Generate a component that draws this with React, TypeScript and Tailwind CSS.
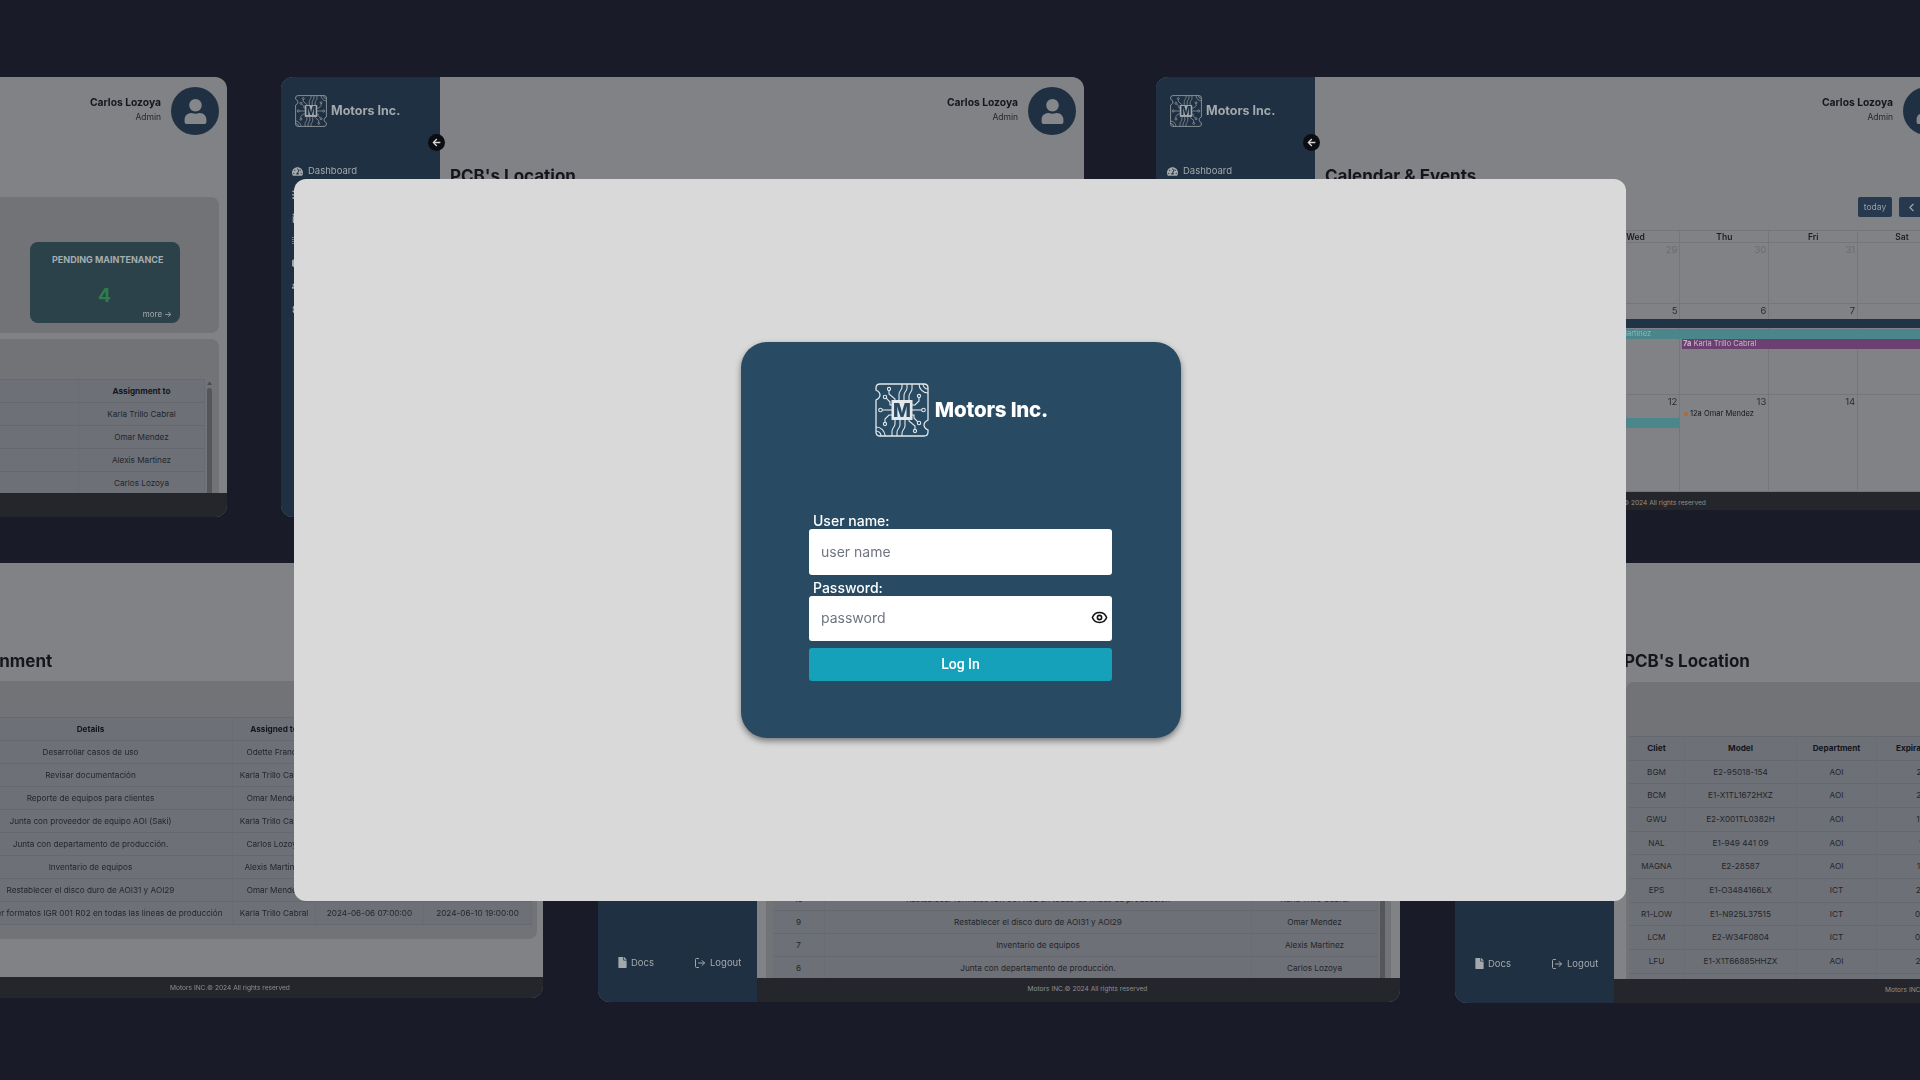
import React from 'react';
import { Eye, ChevronLeft, ChevronRight, LogOut } from 'lucide-react';
import { FaArrowLeft, FaFile, FaTachometerAlt, FaUser, FaTasks, FaCalendarAlt, FaMicrochip, FaUsers, FaCog, FaCube } from 'react-icons/fa';

const Logo = ({ className, ink }: { className: string; ink: string }) => {
  const half = (
    <>
      <path d="M24 17V11c0-3 3-4 3-7V1M29 17v-5c0-3 3-4 3-7V1M34 17v-4c0-3 3-4 3-7V1" />
      <circle cx="14" cy="6" r="1.6" />
      <path d="M14 7.6V11l6 5v1" />
      <circle cx="5.5" cy="27" r="1.8" />
      <path d="M7.3 27H17" />
      <circle cx="10" cy="14" r="1.7" />
      <path d="M11.2 15.2 15 19v3h2" />
      <path d="M44 1a9 9 0 0 0 9 9M48 1a5 5 0 0 0 5 5" />
      <circle cx="44" cy="13" r="1.6" />
      <path d="M44 14.6V18l-4 4h-3" />
    </>
  );
  return (
    <svg viewBox="0 0 54 54" className={className} fill="none" stroke="currentColor" strokeWidth="1.1">
      <path strokeWidth="1.3" d="M5 1H49Q53 1 53 5V37Q49 39 49 42T53 47V49Q53 53 49 53H5Q1 53 1 49V17Q5 15 5 12T1 7V5Q1 1 5 1Z" />
      {half}
      <g transform="rotate(180 27 27)">{half}</g>
      <rect x="16.5" y="17" width="21" height="20" fill="currentColor" stroke="none" />
      <text x="27" y="33.5" textAnchor="middle" fontFamily="Inter, sans-serif" fontWeight="800" fontSize="19" fill={ink} stroke="none">M</text>
    </svg>
  );
};

const navItems = [
  { label: 'Dashboard', icon: FaTachometerAlt },
  { label: 'Assignment', icon: FaTasks },
  { label: 'Calendar', icon: FaCalendarAlt },
  { label: "PCB's Location", icon: FaMicrochip },
  { label: 'Models', icon: FaCube },
  { label: 'Users', icon: FaUsers },
  { label: 'Settings', icon: FaCog },
];

const Sidebar = () => (
  <aside className="relative flex h-full w-[159px] shrink-0 flex-col bg-[#1f3042] text-[#a3a8ac]">
    <div className="flex items-center gap-[4px] pl-[14px] pt-[18px]">
      <Logo className="h-[32px] w-[32px] text-[#a3a8ac]" ink="#1f3042" />
      <span className="text-[12.5px] font-bold">Motors Inc.</span>
    </div>
    <nav className="ml-[11px] mt-[36px] flex flex-col gap-[7px] text-[9.5px]">
      {navItems.map(({ label, icon: Icon }) => (
        <div key={label} className="flex h-[16px] items-center gap-[5px]">
          <Icon className="h-[11px] w-[11px]" />
          <span>{label}</span>
        </div>
      ))}
    </nav>
    <div className="mt-auto flex items-center pb-[32px] pl-[20px] text-[9.5px]">
      <FaFile className="h-[11px] w-[9px]" />
      <span className="ml-[4px]">Docs</span>
      <LogOut className="ml-[40px] h-[12px] w-[12px]" />
      <span className="ml-[4px]">Logout</span>
    </div>
    <div className="absolute left-[147px] top-[57px] z-10 flex h-[17px] w-[17px] items-center justify-center rounded-full bg-[#0c0d11] text-[#d4d5d7]">
      <FaArrowLeft className="h-[9px] w-[9px]" />
    </div>
  </aside>
);

const TopBar = () => (
  <div className="flex h-[68px] shrink-0 items-start justify-end gap-[10px] pr-[8px] pt-[10px]">
    <div className="pt-[9px] text-right">
      <div className="text-[10.3px] font-bold leading-[13px] text-[#14161c]">Carlos Lozoya</div>
      <div className="mt-[2px] text-[8.5px] leading-[13px] text-[#25272c]">Admin</div>
    </div>
    <div className="flex h-[48px] w-[48px] items-center justify-center rounded-full bg-[#1f3042] text-[#85878b]">
      <FaUser className="h-[25px] w-[25px]" />
    </div>
  </div>
);

const Title = ({ children, top }: { children: React.ReactNode; top: string }) => (
  <h2 className={`${top} ml-[10px] h-[22px] shrink-0 whitespace-nowrap text-[17px] font-bold leading-[22px] text-[#14161c]`}>{children}</h2>
);

const PageFooter = ({ size }: { size: string }) => (
  <footer className={`${size} flex shrink-0 items-center justify-center bg-[#25262b] pl-[18px] text-[6.6px] text-[#8d8f93]`}>
    Motors INC.© 2024 All rights reserved
  </footer>
);

const Table = ({ cols, rowClass, rows }: { cols: string; rowClass: string; rows: string[][] }) => (
  <div className="border-t border-[#65686f] bg-[#6d7077] text-[8.2px] text-[#24262b]">
    {rows.map((row, i) => (
      <div key={i} className={`grid ${cols} ${rowClass} border-b border-[#65686f] ${i === 0 ? 'font-bold text-[#14161c]' : ''}`}>
        {row.map((cell, j) => (
          <div key={j} className="flex items-center justify-center whitespace-nowrap border-r border-[#696c73]">{cell}</div>
        ))}
      </div>
    ))}
  </div>
);

const Scrollbar = () => (
  <div className="flex w-[5px] shrink-0 flex-col items-center">
    <span className="mb-[2px] mt-[2px] text-[5px] leading-[5px] text-[#4a4c50]">▲</span>
    <div className="w-[5px] flex-1 rounded-sm bg-[#54565a]" />
  </div>
);

const DashboardWindow = () => (
  <section className="absolute left-[-576px] top-[77px] flex h-[440px] w-[803px] overflow-hidden rounded-[12px] bg-[#818286]">
    <Sidebar />
    <div className="flex min-w-0 flex-1 flex-col">
      <TopBar />
      <div className="flex min-h-0 flex-1 flex-col overflow-hidden pl-[11px] pr-[8px] pt-[52px]">
        <div className="flex h-[136px] shrink-0 justify-end rounded-[8px] bg-[#727377] pr-[39px] pt-[45px]">
          <div className="relative h-[81px] w-[150px] rounded-[8px] bg-[#2b424a] text-[#a6adb0]">
            <div className="pl-[22px] pt-[11px] text-[9px] font-bold">PENDING MAINTENANCE</div>
            <div className="mt-[17px] pl-[68px] text-[19px] font-bold leading-[24px] text-[#2d7d4b]">4</div>
            <div className="absolute bottom-[3px] right-[8px] text-[8px]">more →</div>
          </div>
        </div>
        <div className="mt-[6px] flex flex-1 gap-[2px] rounded-t-[8px] bg-[#727377] pr-[7px] pt-[40px]">
          <div className="flex-1">
            <Table
              cols="grid-cols-[1fr_126px]"
              rowClass="h-[23px]"
              rows={[
                ['', 'Assignment to'],
                ['', 'Karla Trillo Cabral'],
                ['', 'Omar Mendez'],
                ['', 'Alexis Martinez'],
                ['', 'Carlos Lozoya'],
              ]}
            />
          </div>
          <Scrollbar />
        </div>
      </div>
      <PageFooter size="h-[24px]" />
    </div>
  </section>
);

const LocationTopWindow = () => (
  <section className="absolute left-[281px] top-[77px] flex h-[440px] w-[803px] overflow-hidden rounded-[12px] bg-[#818286]">
    <Sidebar />
    <div className="flex min-w-0 flex-1 flex-col">
      <TopBar />
      <Title top="mt-[20px]">PCB's Location</Title>
    </div>
  </section>
);

const weeks = [
  { height: 'h-[61px]', days: ['26', '27', '28', '29', '30', '31', '1'], muted: 6 },
  { height: 'h-[91px]', days: ['2', '3', '4', '5', '6', '7', '8'], muted: 0 },
  { height: 'h-[97px]', days: ['9', '10', '11', '12', '13', '14', '15'], muted: 0 },
];

const CalendarWindow = () => (
  <section className="absolute left-[1156px] top-[77px] flex h-[433px] w-[803px] overflow-hidden rounded-[12px] bg-[#818286]">
    <Sidebar />
    <div className="flex min-w-0 flex-1 flex-col">
      <TopBar />
      <Title top="mt-[20px]">Calendar &amp; Events</Title>
      <div className="ml-[10px] mt-[10px] w-[622px] flex-1 overflow-hidden">
        <div className="flex justify-end">
          <div className="mr-[7px] flex h-[20px] w-[34px] items-center justify-center rounded-[2px] bg-[#27394f] text-[8.5px] text-[#9aa0a8]">today</div>
          <div className="flex h-[20px] w-[24px] items-center justify-center rounded-l-[2px] bg-[#27394f] text-[#a3a8ac]">
            <ChevronLeft className="h-[13px] w-[13px]" />
          </div>
          <div className="flex h-[20px] w-[24px] items-center justify-center rounded-r-[2px] bg-[#27394f] text-[#a3a8ac]">
            <ChevronRight className="h-[13px] w-[13px]" />
          </div>
        </div>
        <div className="mt-[13px] border-t border-[#75767a] text-[8.5px] text-[#1c1e24]">
          <div className="grid h-[12px] grid-cols-7 border-b border-[#75767a] font-semibold">
            {['Sun', 'Mon', 'Tue', 'Wed', 'Thu', 'Fri', 'Sat'].map((d) => (
              <div key={d} className="flex items-center justify-center border-r border-[#75767a]">{d}</div>
            ))}
          </div>
          {weeks.map((week, w) => (
            <div key={w} className={`relative grid ${week.height} grid-cols-7 border-b border-[#75767a]`}>
              {week.days.map((day, i) => (
                <div key={day} className={`border-r border-[#75767a] pr-[2px] text-right text-[9.5px] ${w === 0 && i < week.muted ? 'text-[#6a6b6f]' : 'text-[#2a2c31]'}`}>{day}</div>
              ))}
              {w === 1 && (
                <>
                  <div className="absolute left-0 right-0 top-[15px] h-[9px] bg-[#203347]" />
                  <div className="absolute left-[272px] right-0 top-[25px] h-[10px] bg-[#4a868c] text-[7.5px] leading-[10px] text-[#8fb8b8]">Alexis Martinez</div>
                  <div className="absolute left-[357px] right-0 top-[35px] h-[10px] bg-[#6b4070] pl-[1px] text-[7.5px] leading-[10px] text-[#c8b4c8]">
                    <b>7a</b> Karla Trillo Cabral
                  </div>
                </>
              )}
              {w === 2 && (
                <>
                  <div className="absolute left-0 top-[23px] h-[10px] w-[354px] rounded-r-[1px] bg-[#4a868c]" />
                  <div className="absolute left-[359px] top-[14px] flex items-center gap-[2px] text-[7.5px] leading-[9px] text-[#14161c]">
                    <span className="h-[4px] w-[4px] rounded-full bg-[#b8662a]" />
                    12a Omar Mendez
                  </div>
                </>
              )}
            </div>
          ))}
        </div>
      </div>
      <PageFooter size="h-[18px] pt-[6px]" />
    </div>
  </section>
);

const assignmentRows = [
  ['', 'Details', 'Assigned to', 'Start date', 'End date'],
  ['1', 'Desarrollar casos de uso', 'Odette Franco', '2024-05-20 08:00:00', '2024-05-24 18:00:00'],
  ['2', 'Revisar documentación', 'Karla Trillo Cabral', '2024-05-22 09:00:00', '2024-05-23 17:00:00'],
  ['3', 'Reporte de equipos para clientes', 'Omar Mendez', '2024-05-27 08:00:00', '2024-05-28 12:00:00'],
  ['4', 'Junta con proveedor de equipo AOI (Saki)', 'Karla Trillo Cabral', '2024-05-29 10:00:00', '2024-05-29 12:00:00'],
  ['6', 'Junta con departamento de producción.', 'Carlos Lozoya', '2024-05-30 09:00:00', '2024-05-30 11:00:00'],
  ['7', 'Inventario de equipos', 'Alexis Martinez', '2024-06-03 07:00:00', '2024-06-07 19:00:00'],
  ['9', 'Restablecer el disco duro de AOI31 y AOI29', 'Omar Mendez', '2024-06-04 08:00:00', '2024-06-05 18:00:00'],
  ['10', 'Restablecer formatos IGR 001 R02 en todas las lineas de producción', 'Karla Trillo Cabral', '2024-06-06 07:00:00', '2024-06-10 19:00:00'],
];

const AssignmentWindow = () => (
  <section className="absolute left-[-260px] top-[563px] flex h-[435px] w-[803px] overflow-hidden rounded-[12px] bg-[#818286]">
    <Sidebar />
    <div className="flex min-w-0 flex-1 flex-col">
      <TopBar />
      <Title top="mt-[19px]">Task Assignment</Title>
      <div className="min-h-0 flex-1 pl-[11px] pr-[6px] pt-[9px]">
        <div className="h-[258px] rounded-[8px] bg-[#727377] pl-[6px] pr-[5px] pt-[36px]">
          <Table cols="grid-cols-[33px_284px_83px_108px_108px]" rowClass="h-[23px]" rows={assignmentRows} />
        </div>
      </div>
      <PageFooter size="h-[21px] pt-[2px]" />
    </div>
  </section>
);

const TasksWindow = () => (
  <section className="absolute left-[598px] top-[563px] flex h-[439px] w-[802px] overflow-hidden rounded-[12px] bg-[#818286]">
    <Sidebar />
    <div className="flex min-w-0 flex-1 flex-col">
      <TopBar />
      <Title top="mt-[19px]">Assignment</Title>
      <div className="min-h-0 flex-1 overflow-hidden pl-[9px] pr-[9px] pt-[9px]">
        <div className="flex h-[400px] gap-[2px] rounded-[8px] bg-[#727377] pl-[7px] pr-[6px] pt-[91px]">
          <div className="flex-1">
            <Table
              cols="grid-cols-[52px_1fr_126px]"
              rowClass="h-[23px]"
              rows={[
                ['ID', 'Details', 'Assigned to'],
                ['14', 'Desarrollar casos de uso', 'Odette Franco'],
                ['13', 'Revisar documentación', 'Karla Trillo Cabral'],
                ['12', 'Reporte de equipos para clientes', 'Omar Mendez'],
                ['11', 'Junta con proveedor de equipo AOI (Saki)', 'Karla Trillo Cabral'],
                ['10', 'Restablecer formatos IGR 001 R02 en todas las lineas de producción', 'Karla Trillo Cabral'],
                ['9', 'Restablecer el disco duro de AOI31 y AOI29', 'Omar Mendez'],
                ['7', 'Inventario de equipos', 'Alexis Martinez'],
                ['6', 'Junta con departamento de producción.', 'Carlos Lozoya'],
              ]}
            />
          </div>
          <Scrollbar />
        </div>
      </div>
      <PageFooter size="h-[24px]" />
    </div>
  </section>
);

const LocationWindow = () => (
  <section className="absolute left-[1455px] top-[563px] flex h-[440px] w-[803px] overflow-hidden rounded-[12px] bg-[#818286]">
    <Sidebar />
    <div className="flex min-w-0 flex-1 flex-col">
      <TopBar />
      <Title top="mt-[19px]">PCB's Location</Title>
      <div className="min-h-0 flex-1 overflow-hidden pl-[12px] pr-[9px] pt-[10px]">
        <div className="h-[400px] rounded-[8px] bg-[#727377] pl-[3px] pr-[6px] pt-[54px]">
          <Table
            cols="grid-cols-[56px_112px_80px_126px_1fr]"
            rowClass="h-[23.67px]"
            rows={[
              ['Cliet', 'Model', 'Department', 'Expiration date & time', 'Location'],
              ['BGM', 'E2-95018-154', 'AOI', '2025-01-20', 'Rack A'],
              ['BCM', 'E1-X1TL1672HXZ', 'AOI', '2025-03-14', 'Rack A'],
              ['GWU', 'E2-X001TL0382H', 'AOI', '1998-09-02', 'Rack B'],
              ['NAL', 'E1-949 441 09', 'AOI', '1999-11-18', 'Rack B'],
              ['MAGNA', 'E2-28587', 'AOI', '1997-06-25', 'Rack C'],
              ['EPS', 'E1-O3484166LX', 'ICT', '2025-02-07', 'Rack C'],
              ['R1-LOW', 'E1-N925L37515', 'ICT', '0000-00-00', 'Rack D'],
              ['LCM', 'E2-W34F0804', 'ICT', '0000-00-00', 'Rack D'],
              ['LFU', 'E1-X1T66885HHZX', 'AOI', '2025-05-30', 'Rack E'],
              ['', '', '', '', ''],
            ]}
          />
        </div>
      </div>
      <PageFooter size="h-[24px]" />
    </div>
  </section>
);

const LoginCard = () => (
  <div className="ml-[2px] h-[396px] w-[440px] rounded-[26px] bg-[#284a63] shadow-[0_3px_6px_rgba(0,0,0,0.45)] blur-[0.3px]">
    <div className="flex items-center justify-center gap-[6px] pl-[1px] pt-[41px] text-white">
      <Logo className="h-[54px] w-[54px] text-[#e4e8ea]" ink="#284a63" />
      <span className="text-[20.5px] font-extrabold tracking-[-0.2px]">Motors Inc.</span>
    </div>
    <form className="mt-[75px] flex flex-col pl-[68px] pr-[69px]">
      <label className="pl-[4px] text-[14px] font-medium leading-[17px] text-white">User name:</label>
      <input
        placeholder="user name"
        className="h-[46px] w-full rounded-[3px] bg-white px-[12px] pb-[2px] text-[14px] outline-none placeholder:text-[#6f7580]"
      />
      <label className="mt-[4px] pl-[4px] text-[14px] font-medium leading-[17px] text-white">Password:</label>
      <div className="relative">
        <input
          type="password"
          placeholder="password"
          className="h-[45px] w-full rounded-[3px] bg-white px-[12px] pb-[3px] text-[14px] outline-none placeholder:text-[#6f7580]"
        />
        <Eye className="absolute right-[4px] top-[13px] h-[17px] w-[17px] text-[#111]" strokeWidth={2.2} />
      </div>
      <button type="button" className="mt-[7px] h-[33px] w-full rounded-[3px] bg-[#15a1b9] font-['Roboto',sans-serif] text-[14px] font-medium text-white">
        Log In
      </button>
    </form>
  </div>
);

const App = () => {
  return (
    <div className="relative h-[1080px] w-full overflow-hidden bg-[#191c28] font-['Inter',sans-serif]">
      <div className="blur-[0.5px]">
        <DashboardWindow />
        <LocationTopWindow />
        <CalendarWindow />
        <AssignmentWindow />
        <TasksWindow />
        <LocationWindow />
      </div>
      <div className="absolute left-[294px] top-[179px] flex h-[722px] w-[1332px] items-center justify-center rounded-[12px] bg-[#d9d9d9]">
        <LoginCard />
      </div>
    </div>
  );
};

export default App;
